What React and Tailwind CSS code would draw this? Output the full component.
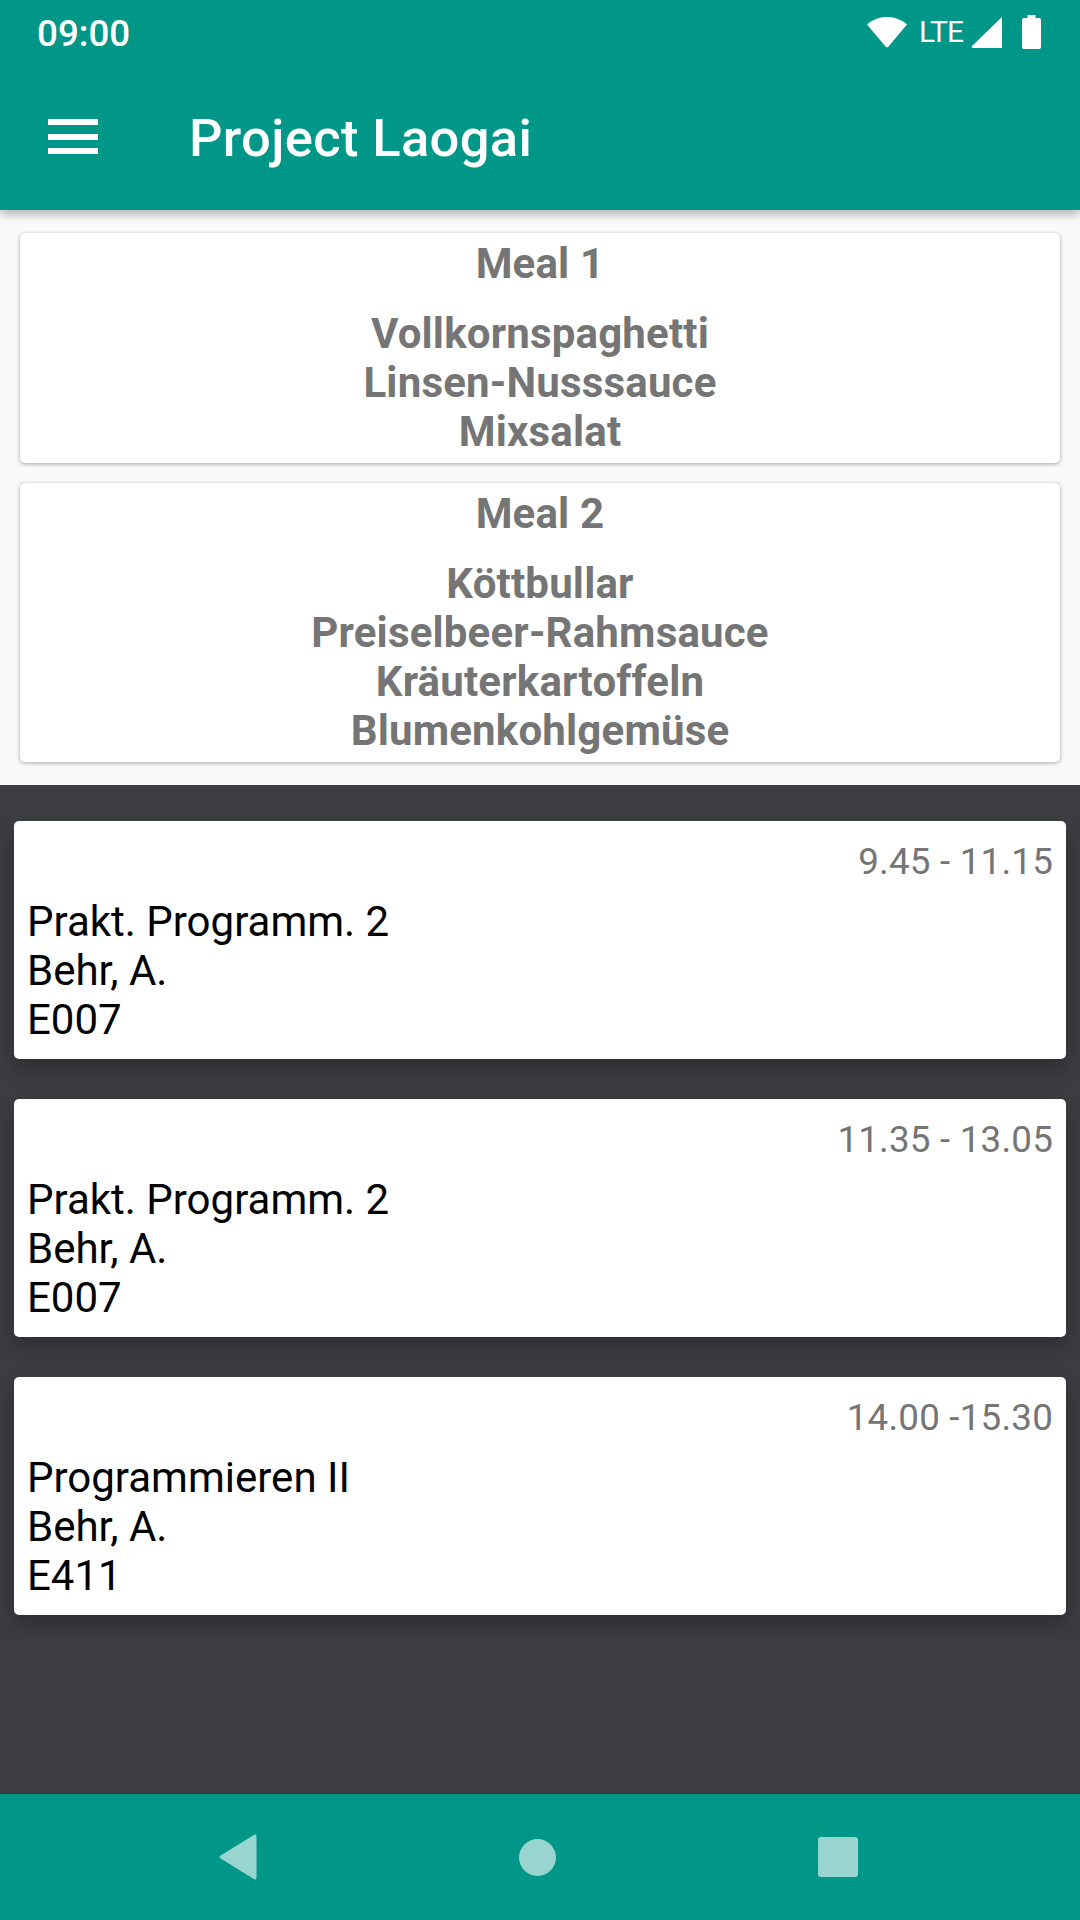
const meals = [
  { title: 'Meal 1', items: ['Vollkornspaghetti', 'Linsen-Nusssauce', 'Mixsalat'] },
  { title: 'Meal 2', items: ['Köttbullar', 'Preiselbeer-Rahmsauce', 'Kräuterkartoffeln', 'Blumenkohlgemüse'] },
];

const lectures = [
  { time: '9.45 - 11.15', name: 'Prakt. Programm. 2', teacher: 'Behr, A.', room: 'E007' },
  { time: '11.35 - 13.05', name: 'Prakt. Programm. 2', teacher: 'Behr, A.', room: 'E007' },
  { time: '14.00 -15.30', name: 'Programmieren II', teacher: 'Behr, A.', room: 'E411' },
];

const StatusBar = () => (
  <div className="flex h-[63px] items-center justify-between pl-[37px] pr-[39px]">
    <span className="text-[36.75px] leading-[43px] font-medium text-white mt-[3px]">09:00</span>
    <div className="flex items-center">
      <svg width="40" height="32" viewBox="0 0 40 32" className="mr-[12px]">
        <path d="M0 8.500C5.500 3.500 12.500 1 20 1s14.500 2.500 20 7.500L21.500 30.500a2 2 0 0 1-3 0z" fill="#fff" />
      </svg>
      <span className="text-[30px] leading-[34px] text-white tracking-[-1px] mr-[8px] font-normal">LTE</span>
      <svg width="31" height="32" viewBox="0 0 31 32" className="mr-[20px]">
        <path d="M31 1v31H2a1.200 1.200 0 0 1-1-2z" fill="#fff" />
      </svg>
      <svg width="19" height="34" viewBox="0 0 19 34">
        <path d="M5.500 0h8v3h3.500a2 2 0 0 1 2 2v27a2 2 0 0 1-2 2H2a2 2 0 0 1-2-2V5a2 2 0 0 1 2-2h3.500z" fill="#fff" />
      </svg>
    </div>
  </div>
);

const AppBar = () => (
  <div className="flex h-[147px] items-center pl-[48px]">
    <div className="flex flex-col gap-[8.5px] w-[50px]">
      <div className="h-[6px] bg-white" />
      <div className="h-[6px] bg-white" />
      <div className="h-[6px] bg-white" />
    </div>
    <h1 className="ml-[91px] mt-[2px] text-[52.5px] leading-[62px] font-medium tracking-[0.35px] text-white">Project Laogai</h1>
  </div>
);

const MealCard = ({ meal }) => (
  <div className="rounded-[5px] bg-white pt-[6px] pb-[7px] text-center text-[42px] leading-[49px] font-bold tracking-[0.18px] text-[#757575] shadow-[0_1px_4px_rgba(0,0,0,0.35)]">
    <div className="mb-[21px]">{meal.title}</div>
    {meal.items.map((item) => (
      <div key={item}>{item}</div>
    ))}
  </div>
);

const LectureCard = ({ lecture }) => (
  <div className="rounded-[5px] bg-white px-[13px] pt-[19px] pb-[15px] shadow-[0_10px_20px_rgba(0,0,0,0.25)]">
    <div className="mb-[14px] text-right text-[36.75px] leading-[43px] tracking-[0.2px] text-[#757575]">{lecture.time}</div>
    <div className="text-[42px] leading-[49px] text-black">
      <div>{lecture.name}</div>
      <div>{lecture.teacher}</div>
      <div>{lecture.room}</div>
    </div>
  </div>
);

const NavBar = () => (
  <div className="flex h-[126px] items-center justify-between bg-[#009688] pl-[219px] pr-[222px]">
    <svg width="38" height="46" viewBox="0 0 38 46">
      <path d="M36 2v42L2 23z" fill="#99d5cf" stroke="#99d5cf" strokeWidth="3" strokeLinejoin="round" />
    </svg>
    <div className="h-[37px] w-[37px] rounded-full bg-[#99d5cf]" />
    <div className="h-[40px] w-[40px] rounded-[3px] bg-[#99d5cf]" />
  </div>
);

export default function App() {
  return (
    <div className="flex h-[1920px] w-[1080px] flex-col overflow-hidden bg-[#fafafa] font-['Roboto',sans-serif]">
      <div className="relative z-10 bg-[#009688] shadow-[0_4px_10px_rgba(0,0,0,0.3)]">
        <StatusBar />
        <AppBar />
      </div>
      <div className="flex h-[575px] flex-col gap-[20px] px-[20px] pt-[23px]">
        {meals.map((meal) => (
          <MealCard key={meal.title} meal={meal} />
        ))}
      </div>
      <div className="flex flex-1 flex-col gap-[40px] bg-[#3c3d41] px-[14px] pt-[36px]">
        {lectures.map((lecture) => (
          <LectureCard key={lecture.time} lecture={lecture} />
        ))}
      </div>
      <NavBar />
    </div>
  );
}
